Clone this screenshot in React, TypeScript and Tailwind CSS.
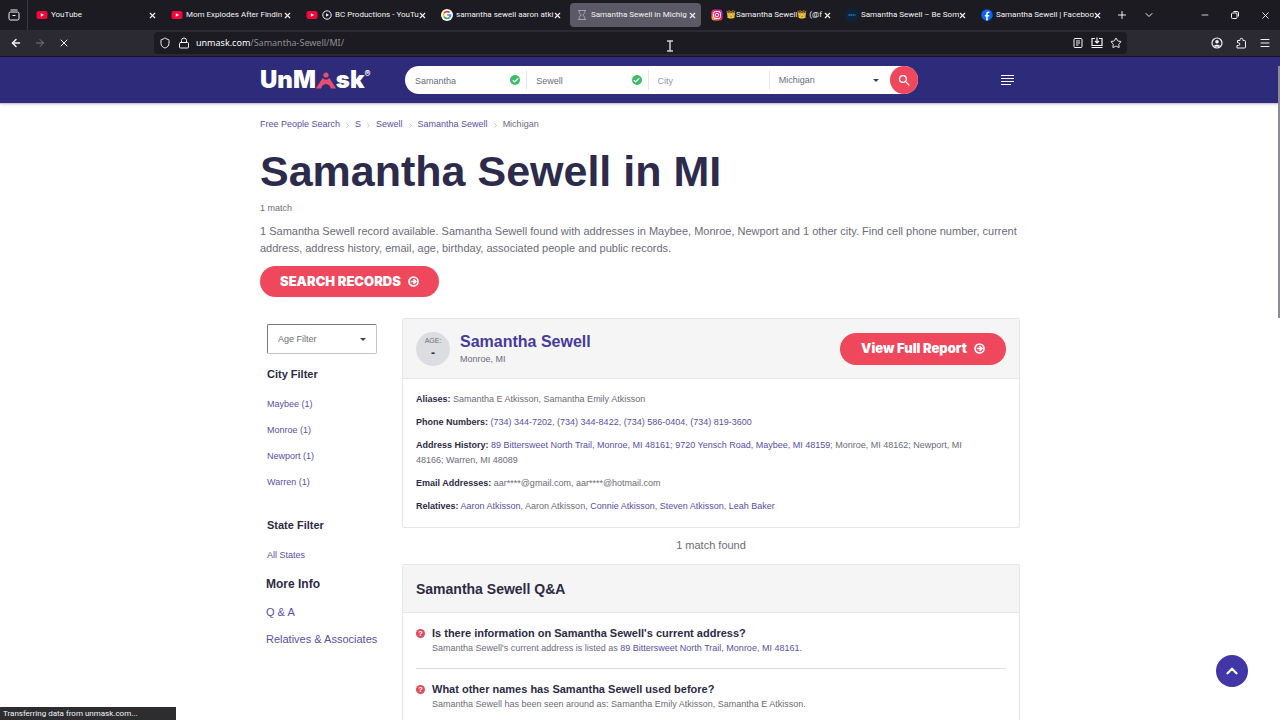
import React from "react";
import {
  ArrowLeft,
  ArrowRight,
  Check,
  ChevronDown,
  ChevronUp,
  Lock,
  Menu,
  Minus,
  Plus,
  Shield,
  Star,
  X,
} from "lucide-react";
import { MdSearch } from "react-icons/md";

const tabs = [
  { icon: "youtube", title: "YouTube" },
  { icon: "youtube", title: "Mom Explodes After Findin" },
  { icon: "youtube", title: "BC Productions - YouTu", playing: true },
  { icon: "google", title: "samantha sewell aaron atki" },
  { icon: "hourglass", title: "Samantha Sewell in Michig", active: true },
  { icon: "instagram", title: "👑Samantha Sewell👑 (@f" },
  { icon: "site", title: "Samantha Sewell – Be Som" },
  { icon: "facebook", title: "Samantha Sewell | Faceboo" },
];

const cities = ["Maybee (1)", "Monroe (1)", "Newport (1)", "Warren (1)"];

function Favicon({ name }: { name: string }) {
  if (name === "youtube")
    return (
      <svg className="h-3 w-3 shrink-0" viewBox="0 0 12 12">
        <rect x="0.5" y="2" width="11" height="8" rx="2" fill="#f4063a" />
        <path d="M4.8 4.2v3.6L8 6z" fill="#fff" />
      </svg>
    );
  if (name === "google")
    return (
      <svg className="h-3 w-3 shrink-0" viewBox="0 0 12 12" fill="none" strokeWidth="1.7">
        <circle cx="6" cy="6" r="6" fill="#fff" />
        <path d="M8.5 3.6A3.5 3.5 0 0 0 3 4.2" stroke="#ea4335" />
        <path d="M3 4.2a3.5 3.5 0 0 0 0 3.6" stroke="#fbbc05" />
        <path d="M3 7.8a3.5 3.5 0 0 0 5.3.8" stroke="#34a853" />
        <path d="M8.3 8.6A3.4 3.4 0 0 0 9.5 6H6.2" stroke="#4285f4" />
      </svg>
    );
  if (name === "hourglass")
    return (
      <svg className="h-3 w-3 shrink-0" viewBox="0 0 12 12" fill="none" stroke="#a5a3b0" strokeWidth="1">
        <path d="M2 1.5h8M2 10.5h8M3.2 1.5v2.2L5.2 6l-2 2.3v2.2M8.8 1.5v2.2L6.8 6l2 2.3v2.2" />
      </svg>
    );
  if (name === "instagram")
    return (
      <svg className="h-3 w-3 shrink-0" viewBox="0 0 12 12" fill="none">
        <defs>
          <linearGradient id="ig" x1="0" y1="1" x2="1" y2="0">
            <stop offset="0" stopColor="#ffc83d" />
            <stop offset="0.5" stopColor="#fb1f6b" />
            <stop offset="1" stopColor="#a62be0" />
          </linearGradient>
        </defs>
        <rect x="0.5" y="0.5" width="11" height="11" rx="3" fill="url(#ig)" />
        <rect x="2.5" y="2.5" width="7" height="7" rx="2" stroke="#fff" />
        <circle cx="6" cy="6" r="1.7" stroke="#fff" />
      </svg>
    );
  if (name === "facebook")
    return (
      <svg className="h-3 w-3 shrink-0" viewBox="0 0 12 12">
        <circle cx="6" cy="6" r="5.7" fill="#0866ff" />
        <path d="M5.2 11.6V7.6H3.9V5.9h1.3V4.8c0-1.6.8-2.4 2.2-2.4.4 0 .8 0 1 .1V4h-.8c-.6 0-.8.3-.8.9v1h1.6l-.3 1.7H6.8v4z" fill="#fff" />
      </svg>
    );
  return (
    <svg className="h-3 w-3 shrink-0" viewBox="0 0 12 12">
      <rect width="12" height="12" rx="3" fill="#0b2440" />
      <path d="M2.5 6h7" stroke="#5f9bc4" strokeWidth="1" strokeDasharray="1.5 .5" />
    </svg>
  );
}

function Browser() {
  return (
    <div className="shrink-0 bg-[#1c1b21] text-[#f3f2f7] font-['Noto_Sans',sans-serif] text-[9px]">
      <div className="flex h-[30px] items-center">
        <div className="flex h-full w-7 shrink-0 items-center justify-center border-r border-[#3a3942]">
          <svg className="h-3 w-3" viewBox="0 0 12 12" fill="none" stroke="currentColor">
            <path d="M2.5 1h7" />
            <rect x="1" y="3" width="10" height="8" rx="1.5" />
            <path d="M4.5 6.5h3" />
          </svg>
        </div>
        {tabs.map((tab, i) => (
          <div key={i} className="w-[135px] shrink-0 px-[2px]">
            <div
              className={
                tab.active
                  ? "flex h-6 items-center rounded-sm bg-[#5b5966] pr-1 pl-[6px]"
                  : "flex h-6 items-center pr-1 pl-[6px]"
              }
            >
              <Favicon name={tab.icon} />
              {tab.playing && (
                <svg className="ml-1 h-[10px] w-[10px] shrink-0" viewBox="0 0 10 10" fill="none" stroke="currentColor">
                  <circle cx="5" cy="5" r="4.2" />
                  <path d="M4 3.2v3.6L7 5z" fill="currentColor" stroke="none" />
                </svg>
              )}
              <span className="ml-[3px] min-w-0 flex-1 font-['Roboto',sans-serif] text-[8px] whitespace-nowrap">
                {tab.title}
              </span>
              <button aria-label="Close tab">
                <X className="h-[9px] w-[9px]" strokeWidth={3} />
              </button>
            </div>
          </div>
        ))}
        <div className="flex flex-1 items-center pl-2">
          <button aria-label="New tab">
            <Plus className="h-3 w-3" />
          </button>
          <button aria-label="List all tabs" className="ml-[15px]">
            <ChevronDown className="h-3 w-3" />
          </button>
        </div>
        <div className="flex items-center gap-5 pr-[9px]">
          <button aria-label="Minimize">
            <Minus className="h-[10px] w-[10px]" />
          </button>
          <button aria-label="Restore">
            <svg className="h-[10px] w-[10px]" viewBox="0 0 10 10" fill="none" stroke="currentColor">
              <rect x="1.5" y="3" width="5.5" height="5.5" rx="1" />
              <path d="M3.5 1.5H7A1.5 1.5 0 0 1 8.5 3v3.5" />
            </svg>
          </button>
          <button aria-label="Close window">
            <X className="h-[11px] w-[11px]" />
          </button>
        </div>
      </div>
      <div className="flex h-[26px] items-center bg-[#2b2a33]">
        <div className="flex w-[154px] shrink-0 items-center gap-3 pl-[10px]">
          <button aria-label="Back">
            <ArrowLeft className="h-3 w-3" strokeWidth={3} />
          </button>
          <button aria-label="Forward" className="text-[#7b7a84]">
            <ArrowRight className="h-3 w-3" />
          </button>
          <button aria-label="Stop">
            <X className="h-3 w-3" />
          </button>
        </div>
        <div className="flex h-[22px] flex-1 items-center rounded-sm bg-[#1c1b21] px-[5px]">
          <Shield className="h-3 w-3" />
          <Lock className="ml-[7px] h-3 w-3" />
          <span className="ml-[6px] flex-1 text-[#8f8e98]">
            <span className="text-[#fbfbfe]">unmask.com</span>/Samantha-Sewell/MI/
          </span>
          <div className="flex items-center gap-[7px]">
            <svg className="h-3 w-3" viewBox="0 0 12 12" fill="none" stroke="currentColor">
              <rect x="2" y="1.5" width="8" height="9" rx="1" />
              <path d="M4 4h4M4 6h4M4 8h2.5" />
            </svg>
            <svg className="h-3 w-3" viewBox="0 0 12 12" fill="none" stroke="currentColor">
              <path d="M4 1.5H1v7h10v-7H8M0.5 10.5h11M6 .5v5M4 4l2 2 2-2" strokeWidth="1.2" />
            </svg>
            <Star className="h-3 w-3" />
          </div>
        </div>
        <div className="flex w-[153px] shrink-0 items-center justify-end gap-3 pr-[9px]">
          <svg className="h-3 w-3" viewBox="0 0 12 12" fill="none" stroke="currentColor">
            <circle cx="6" cy="6" r="5" strokeWidth="1.2" />
            <circle cx="6" cy="4.8" r="1.8" fill="currentColor" stroke="none" />
            <path d="M3 8.8c.5-1.5 5.5-1.5 6 0l-1 .9H4z" fill="currentColor" stroke="none" />
          </svg>
          <svg className="h-3 w-3" viewBox="0 0 12 12" fill="none" stroke="currentColor">
            <path d="M2 11h7.5a1 1 0 0 0 1-1V4.5a1 1 0 0 0-1-1H8V2.8a1.5 1.5 0 0 0-3 0v.7H2.5v2.2h.9a1.3 1.3 0 0 1 0 2.8H2z" />
          </svg>
          <Menu className="h-3 w-3" />
        </div>
      </div>
      <div className="h-px bg-[#15142a]" />
    </div>
  );
}

function Logo() {
  return (
    <a href="#" className="flex h-7 w-[145px] items-center font-['Inter',sans-serif] text-2xl font-black text-white">
      UnM
      <svg className="h-[17px] w-[20px] shrink-0" viewBox="0 0 20 17" fill="#e4506e">
        <circle cx="10" cy="3" r="2.6" />
        <path d="M6.500 6Q10 9.500 13.500 6L20 16.500h-5L13.500 13.500Q10 10.500 6.500 13.500L5 16.500H0z" />
      </svg>
      sk
      <span className="self-start text-[9px] leading-4 font-bold">®</span>
    </a>
  );
}

function Found() {
  return (
    <span className="mr-[6px] flex h-[10px] w-[10px] shrink-0 items-center justify-center rounded-full bg-[#3fbb6c] text-white">
      <Check className="h-[7px] w-[7px]" strokeWidth={4} />
    </span>
  );
}

function CircleArrow() {
  return (
    <svg className="h-[11px] w-[11px] shrink-0" viewBox="0 0 11 11" fill="none" stroke="currentColor" strokeWidth="1.7">
      <circle cx="5.5" cy="5.5" r="4.5" />
      <path d="M2.8 5.5h5M5.5 3.2l2.3 2.3-2.3 2.3" />
    </svg>
  );
}

function Header() {
  return (
    <header className="h-[47px] shrink-0 border-b border-[#c9c8e0] bg-[#2e2b7b] shadow-sm">
      <div className="mx-auto flex h-full w-full max-w-[760px] items-center">
        <Logo />
        <form className="flex h-7 w-[513px] items-center rounded-full bg-white text-[9px] text-[#6c6c78]">
          <div className="flex h-5 flex-1 items-center border-r border-gray-200 pl-[10px]">
            <input aria-label="First name" defaultValue="Samantha" className="h-5 w-full min-w-0 pt-px outline-none" />
            <Found />
          </div>
          <div className="flex h-5 flex-1 items-center border-r border-gray-200 pl-[9px]">
            <input aria-label="Last name" defaultValue="Sewell" className="h-5 w-full min-w-0 pt-px outline-none" />
            <Found />
          </div>
          <div className="flex h-5 flex-1 items-center border-r border-gray-200 pl-[9px]">
            <input
              aria-label="City"
              placeholder="City"
              className="h-5 w-full min-w-0 pt-px outline-none placeholder:text-[#96969f]"
            />
          </div>
          <div className="relative flex h-5 flex-1 items-center pl-[9px]">
            <select aria-label="State" className="h-5 w-full appearance-none bg-transparent pt-px outline-none">
              <option>Michigan</option>
            </select>
            <span className="pointer-events-none absolute right-[11px] border-x-3 border-t-3 border-x-transparent border-t-[#444]" />
          </div>
          <button aria-label="Search" className="flex h-7 w-7 shrink-0 items-center justify-center rounded-full bg-[#ef475b] text-white">
            <MdSearch className="h-[15px] w-[15px]" />
          </button>
        </form>
        <button aria-label="Menu" className="ml-auto pr-[6px] text-white">
          <svg className="h-[10px] w-[13px]" viewBox="0 0 13 10" fill="none" stroke="currentColor" shapeRendering="crispEdges">
            <path d="M0 .5h13M0 3.5h13M0 6.5h13M0 9.5h10" />
          </svg>
        </button>
      </div>
    </header>
  );
}

function L({ children }: { children: React.ReactNode }) {
  return (
    <a href="#" className="text-[#5950a6]">
      {children}
    </a>
  );
}

function Breadcrumbs() {
  const items = ["Free People Search", "S", "Sewell", "Samantha Sewell"];
  return (
    <nav className="flex h-4 items-center text-[9px]">
      {items.map((item) => (
        <React.Fragment key={item}>
          <L>{item}</L>
          <svg className="mx-[5px] h-[5px] w-[5px]" viewBox="0 0 4 5" fill="none" stroke="#c4c4cc">
            <path d="M1 .5l2 2-2 2" />
          </svg>
        </React.Fragment>
      ))}
      <span>Michigan</span>
    </nav>
  );
}

function Sidebar() {
  return (
    <aside className="w-[142px] shrink-0 pt-[6px] text-[9px]">
      <div className="ml-[7px]">
        <div className="relative flex h-[30px] w-[110px] items-center rounded-xs border border-[#c4c4ca] border-t-[#77777f] border-l-[#77777f]">
          <select aria-label="Age Filter" className="h-5 w-full appearance-none bg-transparent pt-px pl-[10px] outline-none">
            <option>Age Filter</option>
          </select>
          <span className="pointer-events-none absolute right-[10px] border-x-3 border-t-3 border-x-transparent border-t-[#444]" />
        </div>
        <h2 className="mt-3 text-[11px] leading-4 font-bold text-[#2d2b45]">City Filter</h2>
        <ul className="mt-[14px] flex flex-col gap-[10px] leading-4">
          {cities.map((city) => (
            <li key={city}>
              <L>{city}</L>
            </li>
          ))}
        </ul>
        <h2 className="mt-[27px] text-[11px] leading-4 font-bold text-[#2d2b45]">State Filter</h2>
        <p className="mt-[14px] leading-4">
          <L>All States</L>
        </p>
      </div>
      <div className="ml-[6px] text-[11px] leading-4">
        <h2 className="mt-[13px] text-xs font-bold text-[#2d2b45]">More Info</h2>
        <p className="mt-3">
          <L>Q & A</L>
        </p>
        <p className="mt-[11px]">
          <L>Relatives & Associates</L>
        </p>
      </div>
    </aside>
  );
}

function Row({ label, children }: { label: string; children: React.ReactNode }) {
  return (
    <p>
      <b className="text-[#2d2b45]">{label}:</b> {children}
    </p>
  );
}

function PersonCard() {
  return (
    <section className="rounded-xs border border-[#e6e6e8]">
      <div className="flex h-[60px] items-center border-b border-[#e6e6e8] bg-[#f5f5f6] px-[13px]">
        <div className="flex h-[34px] w-[34px] flex-col items-center rounded-full bg-[#dcdde1] pt-1">
          <span className="text-[7px] leading-[10px]">AGE:</span>
          <span className="text-xs leading-[14px] font-bold text-[#2d2b45]">-</span>
        </div>
        <div className="ml-[10px]">
          <h2 className="text-base leading-5 font-bold">
            <a href="#" className="text-[#453b9c]">Samantha Sewell</a>
          </h2>
          <p className="text-[9px] leading-[14px]">Monroe, MI</p>
        </div>
        <button className="ml-auto flex h-8 items-center gap-[7px] rounded-full bg-[#ef475b] px-[21px] font-['Inter',sans-serif] text-[13px] font-black text-white">
          View Full Report
          <CircleArrow />
        </button>
      </div>
      <div className="flex flex-col gap-2 py-[13px] pr-9 pl-[13px] text-[9px] leading-[15px]">
        <Row label="Aliases">Samantha E Atkisson, Samantha Emily Atkisson</Row>
        <Row label="Phone Numbers">
          <L>(734) 344-7202</L>, <L>(734) 344-8422</L>, <L>(734) 586-0404</L>, <L>(734) 819-3600</L>
        </Row>
        <Row label="Address History">
          <L>89 Bittersweet North Trail, Monroe, MI 48161</L>; <L>9720 Yensch Road, Maybee, MI 48159</L>; Monroe, MI
          48162; Newport, MI 48166; Warren, MI 48089
        </Row>
        <Row label="Email Addresses">aar****@gmail.com, aar****@hotmail.com</Row>
        <Row label="Relatives">
          <L>Aaron Atkisson</L>, Aaron Atkisson, <L>Connie Atkisson</L>, <L>Steven Atkisson</L>, <L>Leah Baker</L>
        </Row>
      </div>
    </section>
  );
}

function Question({ title, children }: { title: string; children: React.ReactNode }) {
  return (
    <div className="flex border-b border-[#dedee2] pt-3 pb-[13px]">
      <span className="mt-1 flex h-[9px] w-[9px] shrink-0 items-center justify-center rounded-full bg-[#e5475c] text-[8px] leading-none font-bold text-white">
        ?
      </span>
      <div className="ml-[7px]">
        <h3 className="text-[11px] leading-4 font-bold text-[#2d2b45]">{title}</h3>
        <p className="text-[9px] leading-[14px]">{children}</p>
      </div>
    </div>
  );
}

export default function App() {
  return (
    <div className="relative flex h-screen flex-col overflow-hidden bg-white text-[#6c6c76] font-['Liberation_Sans',Arial,sans-serif]">
      <Browser />
      <Header />
      <main className="mx-auto w-full max-w-[760px] pt-[13px]">
        <Breadcrumbs />
        <h1 className="mt-[14px] text-[43px] leading-12 font-bold text-[#2d2b4b]">Samantha Sewell in MI</h1>
        <p className="mt-[5px] text-[9px] leading-4">1 match</p>
        <p className="mt-[7px] text-[11px] leading-[17px]">
          1 Samantha Sewell record available. Samantha Sewell found with addresses in Maybee, Monroe, Newport and 1
          other city. Find cell phone number, current address, address history, email, age, birthday, associated people
          and public records.
        </p>
        <button className="mt-[9px] flex h-[31px] items-center gap-[7px] rounded-full bg-[#ef475b] px-5 font-['Inter',sans-serif] text-[13px] font-black text-white">
          SEARCH RECORDS
          <CircleArrow />
        </button>
        <div className="mt-[21px] flex">
          <Sidebar />
          <div className="min-w-0 flex-1">
            <PersonCard />
            <p className="pt-[9px] pb-[11px] text-center text-[11px] leading-4">1 match found</p>
            <section className="rounded-xs border border-[#e6e6e8]">
              <h2 className="flex h-12 items-center border-b border-[#e6e6e8] bg-[#f5f5f6] px-[13px] text-sm font-bold text-[#2d2b45]">
                Samantha Sewell Q&A
              </h2>
              <div className="px-[13px]">
                <Question title="Is there information on Samantha Sewell's current address?">
                  Samantha Sewell's current address is listed as{" "}
                  <L>89 Bittersweet North Trail, Monroe, MI 48161.</L>
                </Question>
                <Question title="What other names has Samantha Sewell used before?">
                  Samantha Sewell has been seen around as: Samantha Emily Atkisson, Samantha E Atkisson.
                </Question>
              </div>
            </section>
          </div>
        </div>
      </main>

      {/* page scroll thumb */}
      <div className="absolute top-[66px] right-0 h-[252px] w-[2px] bg-[#8c8c94]" />
      <a
        href="#"
        aria-label="Back to top"
        className="absolute right-8 bottom-[33px] flex h-8 w-8 items-center justify-center rounded-full bg-[#4036a8] text-white"
      >
        <ChevronUp className="h-[18px] w-[18px]" strokeWidth={3} />
      </a>
      <div className="absolute bottom-0 left-0 h-[13px] w-[176px] bg-[#2d2d2f] pl-[3px] font-['Roboto',sans-serif] text-[8px] leading-[14px] text-[#f3f2f7]">
        Transferring data from unmask.com...
      </div>
      {/* text cursor */}
      <svg className="absolute top-[40px] left-[666px] h-3 w-2" viewBox="0 0 8 12" fill="none" stroke="#d0d0d4" strokeWidth="1.5">
        <path d="M1 1h6M1 11h6M4 1v10" />
      </svg>
    </div>
  );
}
